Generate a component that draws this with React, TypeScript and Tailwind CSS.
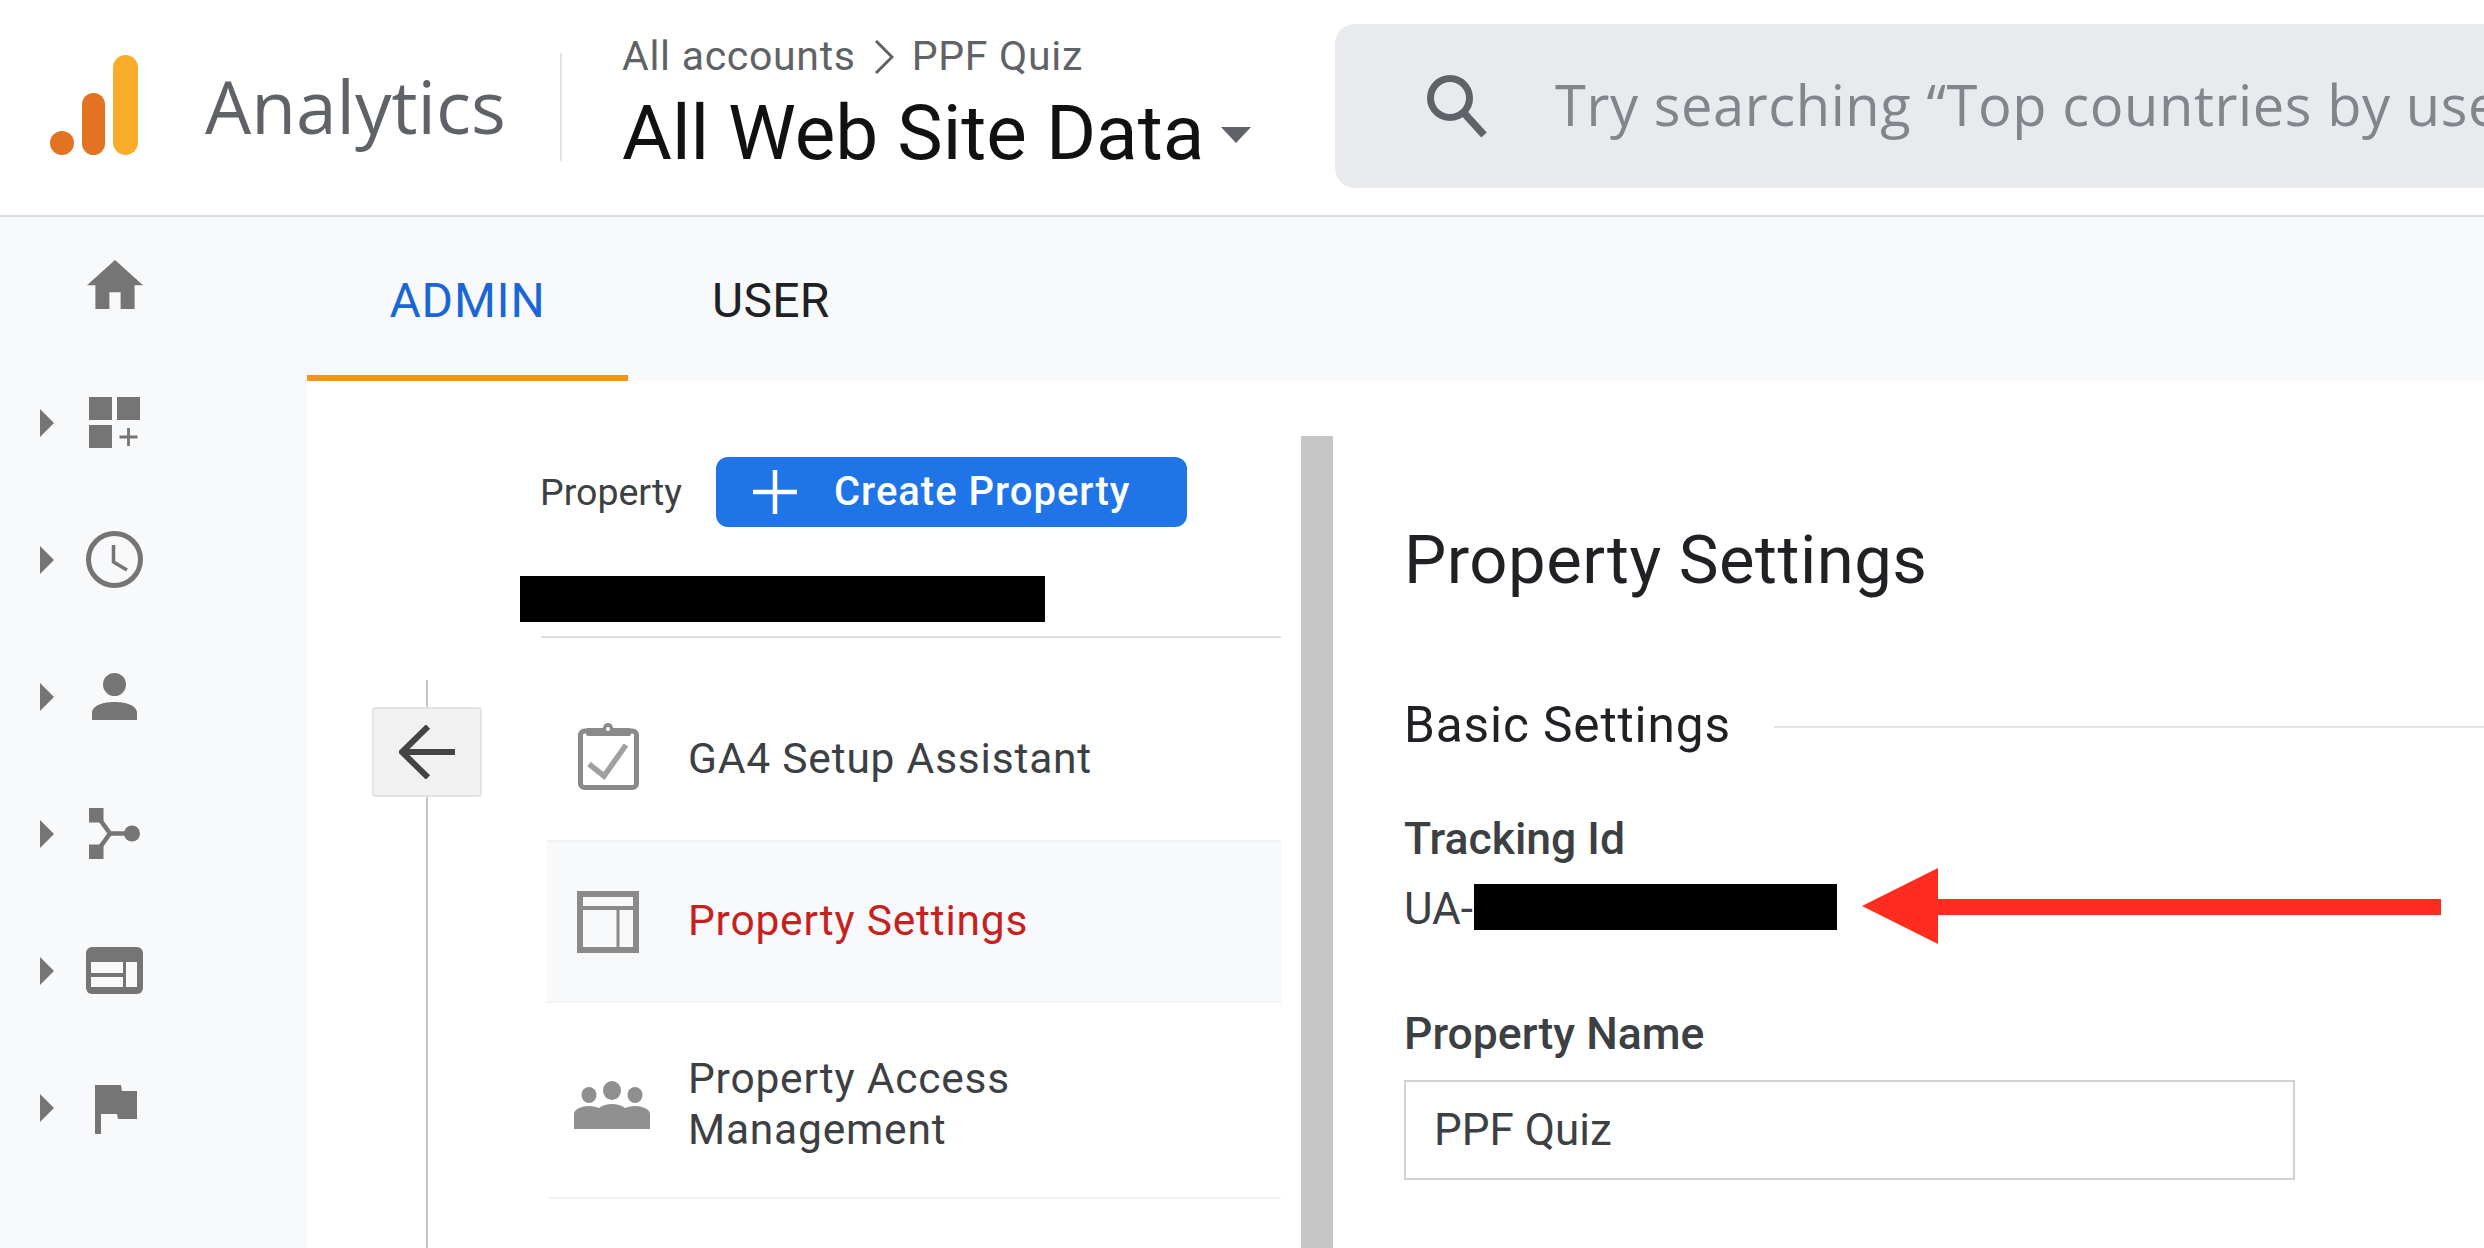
const R = "font-['Roboto',sans-serif]";

function Tri() {
  return (
    <svg width="14" height="28" viewBox="0 0 14 28" className="shrink-0">
      <path d="M0 0L14 14L0 28Z" fill="#757575" />
    </svg>
  );
}

function SideRow({ arrow = true, children }: { arrow?: boolean; children: React.ReactNode }) {
  return (
    <div className="flex h-[137px] items-center pl-10">
      <div className="w-[14px]">{arrow && <Tri />}</div>
      <div className="ml-8 flex w-[57px] justify-center">{children}</div>
    </div>
  );
}

const Home = () => (
  <svg width="56" height="49" viewBox="2 3 20 17.5" className="mb-[3px]"><path d="M10 20.5v-6h4v6h5v-8.5h3L12 3 2 12h3v8.5z" fill="#757575" /></svg>
);
const Apps = () => (
  <svg width="51" height="51" viewBox="0 0 51 51" fill="#757575">
    <rect width="23" height="23" /><rect x="28" width="23" height="23" /><rect y="28" width="23" height="23" />
    <path d="M39.500 31v18M30.500 40h18" stroke="#757575" strokeWidth="2.800" />
  </svg>
);
const Clock = () => (
  <svg width="57" height="57" viewBox="0 0 57 57" fill="none" stroke="#757575">
    <circle cx="28.500" cy="28.500" r="26" strokeWidth="5" />
    <path d="M27.500 14V31L41 39" strokeWidth="3.500" />
  </svg>
);
const Person = () => (
  <svg width="45" height="47" viewBox="0 0 45 47" fill="#757575">
    <circle cx="22.500" cy="11.500" r="11.500" />
    <path d="M0 47V40C0 32 12 29 22.500 29S45 32 45 40V47Z" />
  </svg>
);
const Share = () => (
  <svg width="51" height="51" viewBox="0 0 51 51" fill="#757575">
    <rect width="14.500" height="14.500" /><rect y="36.500" width="14.500" height="14.500" />
    <circle cx="43" cy="25.500" r="8" />
    <path d="M9 9L21 25.500L9 42M21 25.500H38" fill="none" stroke="#757575" strokeWidth="4.500" />
  </svg>
);
const Table = () => (
  <svg width="57" height="47" viewBox="0 0 57 47">
    <rect width="57" height="47" rx="6" fill="#757575" />
    <path d="M5 15H37V26H5ZM5 30H37V40H5ZM40 15H51V40H40Z" fill="#f8f9fa" />
  </svg>
);
const Flag = () => (
  <svg width="42" height="49" viewBox="0 0 42 49" className="ml-[3px] mt-[4px]"><path d="M0 0H26L27 6H42V34H23L22 29H6V49H0Z" fill="#757575" /></svg>
);

const Clipboard = () => (
  <svg width="61" height="68" viewBox="0 0 61 68" fill="none" className="mr-[8px]">
    <rect x="2.500" y="9" width="56" height="56.500" rx="4" stroke="#8a8a8a" strokeWidth="5" />
    <rect x="8" y="6" width="45" height="8" rx="2" fill="#8a8a8a" />
    <circle cx="30" cy="6" r="5" fill="#8a8a8a" />
    <circle cx="30" cy="7" r="2" fill="#fff" />
    <path d="M11 42L26 54L48 23" stroke="#a0a0a0" strokeWidth="5.500" />
  </svg>
);
const SettingsIcon = () => (
  <svg width="62" height="62" viewBox="0 0 62 62" fill="none" stroke="#8a8a8a" className="mr-[8px]">
    <rect x="3" y="3" width="56" height="56" strokeWidth="6" />
    <path d="M3 17H59" strokeWidth="4" />
    <path d="M41 17V56" strokeWidth="3" />
  </svg>
);
const People = () => (
  <svg width="76" height="48" viewBox="0 0 76 48" fill="#8f8f8f">
    <ellipse cx="38" cy="9.500" rx="9" ry="9.500" />
    <ellipse cx="15" cy="14" rx="7.500" ry="8" />
    <ellipse cx="61" cy="14" rx="7.500" ry="8" />
    <path d="M0 48V33C0 28 8 25 15 25C19 25 22 26 25 27C29 24 33 23 38 23S47 24 51 27C54 26 57 25 61 25C68 25 76 28 76 33V48Z" />
  </svg>
);

function NavRow({ icon, children, className = "", textClass = "" }: { icon: React.ReactNode; children: React.ReactNode; className?: string; textClass?: string }) {
  return (
    <div className={`ml-[6px] flex items-center pl-[27px] ${className}`}>
      <div className="flex w-[76px] shrink-0 justify-center">{icon}</div>
      <div className={`ml-[38px] text-[42.500px] leading-[51px] tracking-[0.8px] ${textClass}`}>{children}</div>
    </div>
  );
}

export default function App() {
  return (
    <div className={`flex h-[1248px] w-[2484px] flex-col overflow-hidden bg-white ${R}`}>
      <header className="flex h-[217px] shrink-0 items-center border-b-2 border-[#dadce0] bg-white">
        <div className="-mt-[6px] flex h-[100px] w-[205px] shrink-0 items-end gap-[8px] pl-[50px]">
          <div className="h-6 w-6 rounded-full bg-[#e37222]" />
          <div className="h-[62px] w-[23px] rounded-full bg-[#e37222]" />
          <div className="h-[100px] w-[25px] rounded-full bg-[#f9ab2a]" />
        </div>
        <div className="-mt-[5px] w-[355px] shrink-0 font-['Open_Sans',sans-serif] text-[73px] leading-none text-[#5f6368]">Analytics</div>
        <div className="-mt-[2px] h-[108px] w-[2px] shrink-0 bg-[#e3e4e6]" />
        <div className="-mt-[12px] ml-[60px] w-[713px] shrink-0">
          <div className="flex h-[48px] items-center text-[41px] leading-none tracking-[0.7px] text-[#5f6368]">
            <span>All accounts</span>
            <svg width="20" height="34" viewBox="0 0 20 34" fill="none" className="mx-[18px]"><path d="M2 1L18 17L2 33" stroke="#5f6368" strokeWidth="3" /></svg>
            <span>PPF Quiz</span>
          </div>
          <div className="mt-[16px] flex h-[74px] items-center text-[76.500px] leading-none text-[#111]">
            <span>All Web Site Data</span>
            <svg width="30" height="16" viewBox="0 0 30 16" className="ml-[17px] mt-[2px]"><path d="M0 0H30L15 16Z" fill="#5f6368" /></svg>
          </div>
        </div>
        <div className="-mt-[3px] flex h-[164px] flex-1 items-center overflow-hidden rounded-l-[20px] bg-[#e8eaed] pl-[92px]">
          <svg width="62" height="62" viewBox="0 0 62 62" fill="none" stroke="#5f6368" className="shrink-0">
            <circle cx="23" cy="23" r="19.500" strokeWidth="7" />
            <path d="M37 38L57 60" strokeWidth="7.500" />
          </svg>
          <div className="mb-[4px] ml-[66px] whitespace-nowrap font-['Open_Sans',sans-serif] text-[56px] leading-none tracking-[0.6px] text-[#80868b]">Try searching “Top countries by users”</div>
        </div>
      </header>

      <div className="flex min-h-0 flex-1 bg-[#f8f9fa]">
        <aside className="w-[307px] shrink-0">
          <SideRow arrow={false}><Home /></SideRow>
          <SideRow><Apps /></SideRow>
          <SideRow><Clock /></SideRow>
          <SideRow><Person /></SideRow>
          <SideRow><Share /></SideRow>
          <SideRow><Table /></SideRow>
          <SideRow><Flag /></SideRow>
        </aside>

        <main className="flex min-w-0 flex-1 flex-col">
          <nav className="flex h-[164px] shrink-0">
            <div className="flex h-full w-[321px] items-center justify-center border-b-[6px] border-[#f6921e] pt-[10px] text-[48px] tracking-[0.8px] text-[#1a66d6]">ADMIN</div>
            <div className="ml-[84px] flex h-full items-center pt-[4px] text-[48px] tracking-[0.3px] text-[#202124]">USER</div>
          </nav>

          <div className="flex min-h-0 flex-1 bg-white">
            <div className="ml-[65px] flex w-[110px] shrink-0 flex-col items-center pt-[299px]">
              <div className="h-[27px] w-[2px] bg-[#c4c4c4]" />
              <div className="flex h-[90px] w-[110px] shrink-0 items-center justify-center rounded-[4px] border-2 border-[#e3e3e3] bg-[#f1f1f1]">
                <svg width="56" height="54" viewBox="0 0 56 54" fill="none" stroke="#444"><path d="M56 27H4M29 1.500L3 27L29 52.500" strokeWidth="6" /></svg>
              </div>
              <div className="w-[2px] flex-1 bg-[#c4c4c4]" />
            </div>

            <div className="ml-[59px] w-[740px] shrink-0 pt-[76px]">
              <div className="flex items-center">
                <span className="-ml-[1px] w-[176px] text-[37.500px] text-[#3c4043]">Property</span>
                <button className="flex h-[70px] w-[471px] items-center rounded-xl bg-[#1f74e8] pl-[37px] text-[40px] font-medium tracking-[1px] text-white">
                  <svg width="44" height="44" viewBox="0 0 44 44" stroke="#fff" strokeWidth="4.500"><path d="M22 0V44M0 22H44" /></svg>
                  <span className="ml-[37px]">Create Property</span>
                </button>
              </div>
              <div className="-ml-[21px] mt-[49px] h-[46px] w-[525px] bg-black" />
              <div className="mt-[14px] h-[2px] bg-[#dadce0]" />
              <NavRow icon={<Clipboard />} className="h-[202px] pt-[34px] text-[#3c4043]" textClass="mt-[4px]">GA4 Setup Assistant</NavRow>
              <NavRow icon={<SettingsIcon />} className="h-[163px] border-y-2 border-[#f1f3f4] bg-[#f8f9fa] text-[#c5221f]" textClass="mb-[3px]">Property Settings</NavRow>
              <NavRow icon={<div className="mt-[1px]"><People /></div>} className="h-[196px] border-b-2 border-[#f1f3f4] pt-[8px] text-[#3c4043]">
                Property Access<br />Management
              </NavRow>
            </div>

            <div className="ml-[20px] mt-[55px] w-[32px] shrink-0 bg-[#c6c6c6]" />

            <section className="min-w-0 flex-1 pl-[71px] pt-[129px] text-[#202124]">
              <h1 className="text-[67px] font-normal leading-[100px] tracking-[0.5px]">Property Settings</h1>
              <div className="mt-[83px] flex items-center">
                <h2 className="text-[49.500px] leading-[64px] tracking-[0.9px]">Basic Settings</h2>
                <div className="ml-[43px] mt-[3px] h-[2px] flex-1 bg-[#e3e3e3]" />
              </div>
              <div className="mt-[57px] text-[44.500px] font-medium leading-[50px] text-[#3c4043]">Tracking Id</div>
              <div className="mt-[19px] flex h-[48px] items-center text-[44px] text-[#3c4043]">
                <span className="mt-[4px] w-[70px] whitespace-nowrap">UA-</span>
                <div className="h-[46px] w-[363px] bg-black" />
                <svg width="580" height="76" viewBox="0 0 580 76" className="mb-[2px] ml-[25px]"><path d="M0 38L76 0V31H579V47H76V76Z" fill="#ff2d20" /></svg>
              </div>
              <div className="mt-[78px] text-[44.500px] font-medium leading-[50px] text-[#3c4043]">Property Name</div>
              <div className="mt-[21px] flex h-[100px] w-[891px] items-center border-2 border-[#d2d2d2] bg-white pl-[28px] text-[44px] text-[#3c4043]">PPF Quiz</div>
            </section>
          </div>
        </main>
      </div>
    </div>
  );
}
